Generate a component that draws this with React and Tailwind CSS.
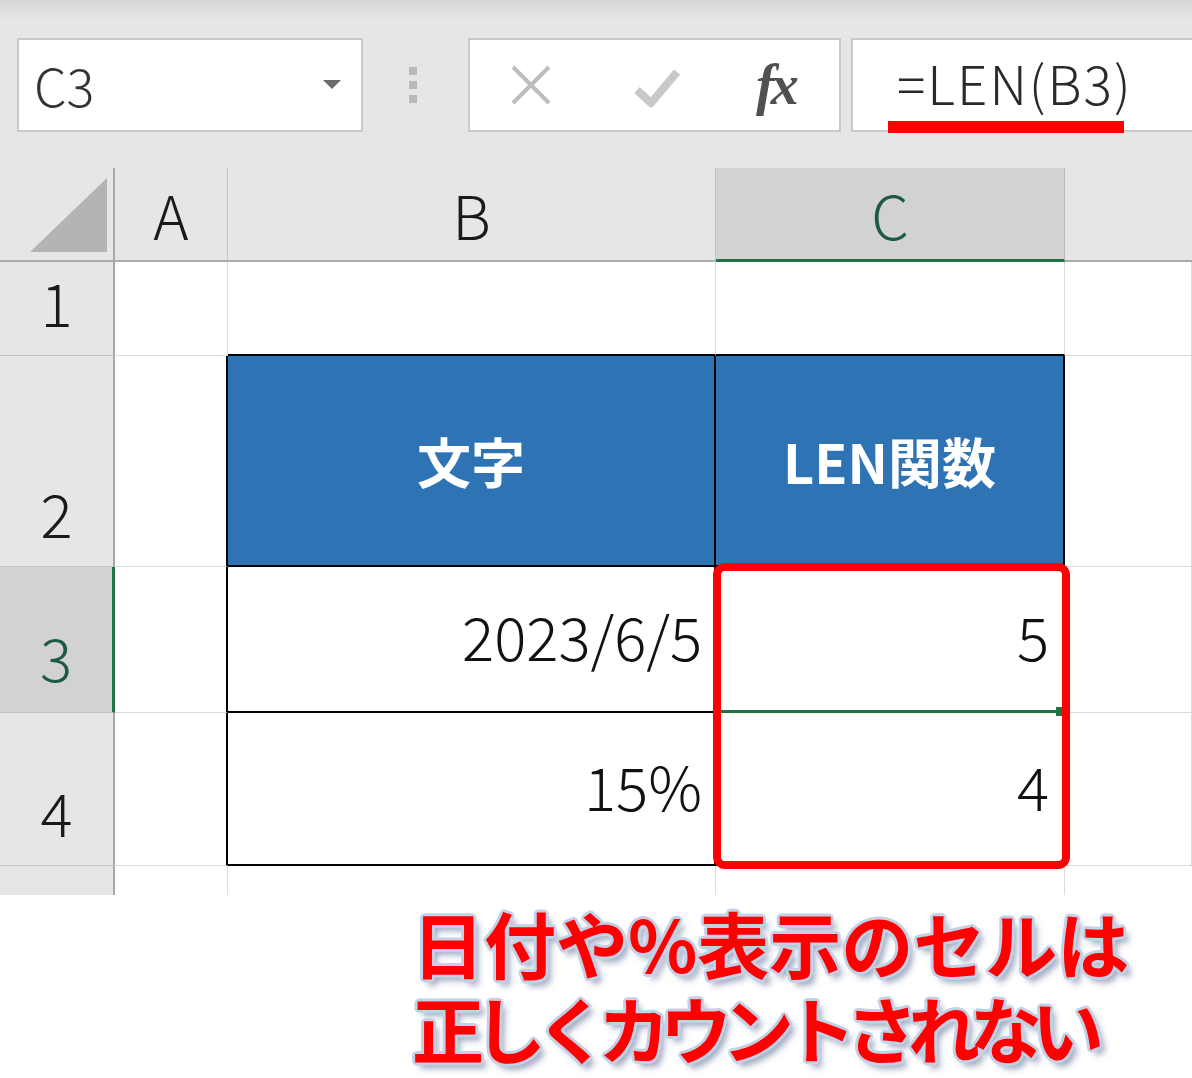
const hdr = "flex items-center justify-center bg-[#e6e6e6] border-r border-b-2 border-r-[#c4c4c4] border-b-[#ababab] text-[60px] font-light text-[#1a1a1a] leading-none";
const rowHdr = "flex items-end justify-center pb-[24px] bg-[#e6e6e6] border-r-2 border-b border-r-[#a8a8a8] border-b-[#c4c4c4] text-[60px] font-light text-[#1a1a1a] leading-none";
const cell = "bg-white border-r border-b border-[#dadada]";

function FormulaBar() {
  return (
    <div className="h-[168px] bg-gradient-to-b from-[#d6d6d6] via-[#e6e6e6] via-[12%] to-[#e6e6e6] flex items-start pt-[38px] pl-[17px] relative">
      <div className="w-[346px] h-[94px] bg-white border-2 border-[#c9c9c9] flex items-center justify-between pl-[15px] pr-[20px]">
        <span className="text-[52px] font-light text-[#333] leading-none">C3</span>
        <svg width="18" height="10" viewBox="0 0 18 10"><polygon points="0,0 18,0 9,9" fill="#6b6b6b" /></svg>
      </div>
      <div className="ml-[46px] mt-[29px] flex flex-col gap-[6px]">
        <div className="w-[8px] h-[8px] bg-[#b9b9b9]" />
        <div className="w-[8px] h-[8px] bg-[#b9b9b9]" />
        <div className="w-[8px] h-[8px] bg-[#b9b9b9]" />
      </div>
      <div className="ml-[51px] w-[373px] h-[94px] bg-white border-2 border-[#c9c9c9] flex items-center pl-[40px]">
        <svg width="42" height="42" viewBox="0 0 42 42">
          <line x1="3" y1="3" x2="39" y2="39" stroke="#bdbdbd" strokeWidth="4" />
          <line x1="39" y1="3" x2="3" y2="39" stroke="#bdbdbd" strokeWidth="4" />
        </svg>
        <svg className="ml-[82px] mt-[6px]" width="46" height="40" viewBox="0 0 46 40">
          <polyline points="3,22 17,35 43,4" fill="none" stroke="#c8c8c8" strokeWidth="8" strokeLinejoin="round" />
        </svg>
        <span className="ml-[76px] font-['Liberation_Serif',serif] italic font-bold text-[56px] text-[#505050] leading-none tracking-[-4px]">fx</span>
      </div>
      <div className="ml-[10px] flex-1 h-[94px] bg-white border-2 border-r-0 border-[#c9c9c9] flex items-center pl-[44px]">
        <span className="text-[53px] font-light text-[#2a2a2a] leading-none tracking-[2px] -mt-[6px]">=LEN(B3)</span>
      </div>
      <div className="absolute left-[888px] top-[121px] w-[236px] h-[12px] bg-[#ff0000]" />
    </div>
  );
}

function Sheet() {
  return (
    <div className="relative grid grid-cols-[115px_113px_488px_349px_127px] grid-rows-[94px_94px_211px_146px_153px_29px]">
      <div className="bg-[#e6e6e6] border-r-2 border-b-2 border-r-[#a8a8a8] border-b-[#ababab] flex items-end">
        <svg width="113" height="92" viewBox="0 0 113 92"><polygon points="30,84 107,84 107,10" fill="#b4b4b4" /></svg>
      </div>
      <div className={hdr}>A</div>
      <div className={hdr}>B</div>
      <div className="flex items-center justify-center bg-[#d2d2d2] border-r border-b-[3px] border-r-[#b8b8b8] border-b-[#217346] text-[60px] font-light text-[#1d5a44] leading-none">C</div>
      <div className="bg-[#e6e6e6] border-b-2 border-b-[#ababab]" />

      <div className={rowHdr}>1</div>
      <div className={cell} />
      <div className="bg-white border-r border-b-2 border-r-[#dadada] border-b-black" />
      <div className="bg-white border-r border-b-2 border-r-[#dadada] border-b-black" />
      <div className={cell} />

      <div className={rowHdr}>2</div>
      <div className="bg-white border-r-2 border-b border-r-black border-b-[#dadada]" />
      <div className="bg-[#2e74b5] border-r-2 border-b-2 border-black flex items-center justify-center text-white font-bold text-[54px] leading-none">文字</div>
      <div className="bg-[#2e74b5] border-r-2 border-b-2 border-black flex items-center justify-center text-white font-bold text-[54px] leading-none">LEN関数</div>
      <div className={cell} />

      <div className="flex items-end justify-center pb-[26px] bg-[#d2d2d2] border-r-[3px] border-b border-r-[#217346] border-b-[#c4c4c4] text-[60px] font-light text-[#1d5a44] leading-none">3</div>
      <div className="bg-white border-r-2 border-b border-r-black border-b-[#dadada]" />
      <div className="bg-white border-r-2 border-b-2 border-black flex items-center justify-end pr-[12px] pb-[8px] text-[60px] font-light text-[#111] leading-none">2023/6/5</div>
      <div className="relative bg-white border-r-2 border-b-[3px] border-r-black border-b-[#217346] flex items-center justify-end pr-[14px] pb-[8px] text-[60px] font-light text-[#111] leading-none">
        5
        <div className="absolute right-[-2px] bottom-[-6px] w-[9px] h-[9px] bg-[#217346]" />
      </div>
      <div className={cell} />

      <div className={rowHdr}>4</div>
      <div className="bg-white border-r-2 border-b border-r-black border-b-[#dadada]" />
      <div className="bg-white border-r-2 border-b-2 border-black flex items-center justify-end pr-[12px] pb-[8px] text-[60px] font-light text-[#111] leading-none">15%</div>
      <div className="bg-white border-r-2 border-b-2 border-black flex items-center justify-end pr-[14px] pb-[8px] text-[60px] font-light text-[#111] leading-none">4</div>
      <div className={cell} />

      <div className="bg-[#e6e6e6] border-r-2 border-r-[#a8a8a8]" />
      <div className="bg-white border-r border-[#dadada]" />
      <div className="bg-white border-r border-[#dadada]" />
      <div className="bg-white border-r border-[#dadada]" />
      <div className="bg-white" />

      <div className="absolute left-[713px] top-[395px] w-[357px] h-[306px] border-[8px] border-[#ff0000] rounded-[12px]" />
    </div>
  );
}

function Note() {
  return (
    <div className="pl-[412px] pt-[4px] text-[#ff0000] font-bold text-[72px] leading-[85px] [text-shadow:3px_0_0_#c3d0e6,-3px_0_0_#c3d0e6,0_3px_0_#c3d0e6,0_-3px_0_#c3d0e6,2px_2px_0_#c3d0e6,-2px_-2px_0_#c3d0e6,2px_-2px_0_#c3d0e6,-2px_2px_0_#c3d0e6,5px_6px_6px_rgba(80,100,140,0.55)]">
      <div className="tracking-[0px]">日付や%表示のセルは</div>
      <div className="tracking-[-10px]">正しくカウントされない</div>
    </div>
  );
}

export default function App() {
  return (
    <div className="w-[1192px] h-[1078px] overflow-hidden bg-white font-['Noto_Sans_CJK_JP',sans-serif]">
      <FormulaBar />
      <Sheet />
      <Note />
    </div>
  );
}
